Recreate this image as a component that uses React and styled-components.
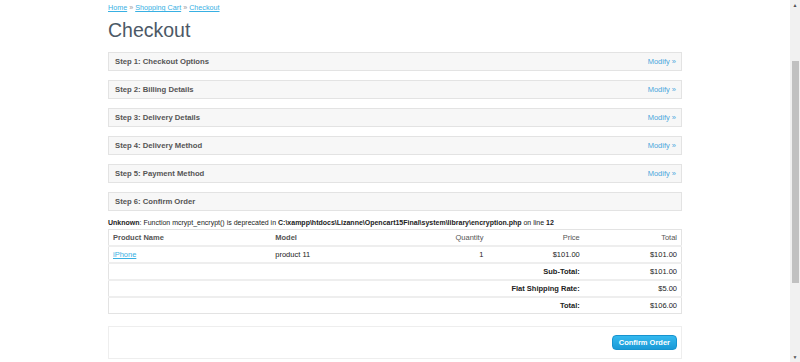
import React from "react";
import styled, { createGlobalStyle } from "styled-components";

const GlobalStyle = createGlobalStyle`
  html, body {
    margin: 0;
    padding: 0;
    background: #fff;
    overflow: hidden;
  }
  body {
    font-family: "Liberation Sans", Arial, sans-serif;
    color: #333;
  }
`;

const Page = styled.div`
  display: flex;
  width: 800px;
  height: 362px;
  overflow: hidden;
`;

const Main = styled.div`
  flex: 1;
  display: flex;
  justify-content: center;
`;

const Container = styled.div`
  width: 574px;
  padding-top: 3px;
`;

const Breadcrumb = styled.div`
  font-size: 7.2px;
  line-height: 10px;
  color: #999;
  a {
    color: #38b0e3;
    text-decoration: underline;
  }
`;

const Title = styled.h1`
  margin: 5px 0 10px;
  font-size: 19.5px;
  line-height: 24px;
  font-weight: normal;
  color: #4c5966;
`;

const Step = styled.div`
  display: flex;
  align-items: center;
  justify-content: space-between;
  height: 17px;
  padding: 0 5px 0 6px;
  margin-bottom: 9px;
  background: #f7f7f7;
  border: 1px solid #e3e3e3;
  font-size: 7.7px;
  font-weight: bold;
  color: #555;
`;

const Modify = styled.a`
  font-size: 7.5px;
  font-weight: normal;
  color: #4aa6dc;
`;

const Warning = styled.div`
  font-size: 7px;
  line-height: 10px;
  color: #222;
  margin: -2px 0 1px;
  b { font-weight: bold; }
`;

const Table = styled.table`
  width: 100%;
  border-collapse: collapse;
  border: 1px solid #e3e3e3;
  font-size: 7.5px;
  color: #222;
`;

const Cell = styled.td`
  height: 15px;
  padding: 0 4px;
  text-align: ${(p) => p.align || "left"};
  font-weight: ${(p) => (p.bold ? "bold" : "normal")};
  border-top: ${(p) => (p.head ? "none" : "2px solid #eee")};
  color: ${(p) => (p.head ? "#555" : "#222")};
  a { color: #38b0e3; text-decoration: underline; }
`;

const Buttons = styled.div`
  display: flex;
  justify-content: flex-end;
  align-items: center;
  margin-top: 12px;
  height: 31px;
  padding: 0 4px;
  border: 1px solid #eee;
`;

const Button = styled.button`
  height: 15px;
  padding: 0 6px;
  border: 1px solid #1693cf;
  border-radius: 4px;
  background: linear-gradient(#34b9ef, #1a9ad7);
  color: #fff;
  font-family: "Liberation Sans", Arial, sans-serif;
  font-size: 7.5px;
  font-weight: bold;
`;

const Scrollbar = styled.div`
  width: 10px;
  height: 362px;
  background: #f1f1f1;
  display: flex;
  flex-direction: column;
  align-items: center;
`;

const Arrow = styled.div`
  height: 10px;
  display: flex;
  align-items: center;
  justify-content: center;
  color: #505050;
  font-size: 5px;
`;

const Track = styled.div`
  flex: 1;
  width: 100%;
  display: flex;
  flex-direction: column;
  align-items: center;
  padding-top: 51px;
`;

const Thumb = styled.div`
  width: 7px;
  height: 222px;
  background: #c1c1c1;
`;

const steps = [
  "Step 1: Checkout Options",
  "Step 2: Billing Details",
  "Step 3: Delivery Details",
  "Step 4: Delivery Method",
  "Step 5: Payment Method",
];

const totals = [
  ["Sub-Total:", "$101.00"],
  ["Flat Shipping Rate:", "$5.00"],
  ["Total:", "$106.00"],
];

const App = () => {
  return (
    <>
      <GlobalStyle />
      <Page>
        <Main>
          <Container>
            <Breadcrumb>
              <a href="#">Home</a> » <a href="#">Shopping Cart</a> » <a href="#">Checkout</a>
            </Breadcrumb>
            <Title>Checkout</Title>
            {steps.map((s) => (
              <Step key={s}>
                <span>{s}</span>
                <Modify>Modify »</Modify>
              </Step>
            ))}
            <Step>
              <span>Step 6: Confirm Order</span>
            </Step>
            <Warning>
              <b>Unknown</b>: Function mcrypt_encrypt() is deprecated in{" "}
              <b>C:\xampp\htdocs\Lizanne\Opencart15Final\system\library\encryption.php</b> on line <b>12</b>
            </Warning>
            <Table>
              <tbody>
                <tr>
                  <Cell head bold>Product Name</Cell>
                  <Cell head bold>Model</Cell>
                  <Cell head align="right">Quantity</Cell>
                  <Cell head align="right">Price</Cell>
                  <Cell head align="right">Total</Cell>
                </tr>
                <tr>
                  <Cell><a href="#">iPhone</a></Cell>
                  <Cell>product 11</Cell>
                  <Cell align="right">1</Cell>
                  <Cell align="right">$101.00</Cell>
                  <Cell align="right">$101.00</Cell>
                </tr>
                {totals.map(([label, value]) => (
                  <tr key={label}>
                    <Cell colSpan={4} align="right" bold>{label}</Cell>
                    <Cell align="right">{value}</Cell>
                  </tr>
                ))}
              </tbody>
            </Table>
            <Buttons>
              <Button>Confirm Order</Button>
            </Buttons>
          </Container>
        </Main>
        <Scrollbar>
          <Arrow>▲</Arrow>
          <Track>
            <Thumb />
          </Track>
          <Arrow>▼</Arrow>
        </Scrollbar>
      </Page>
    </>
  );
};

export default App;
